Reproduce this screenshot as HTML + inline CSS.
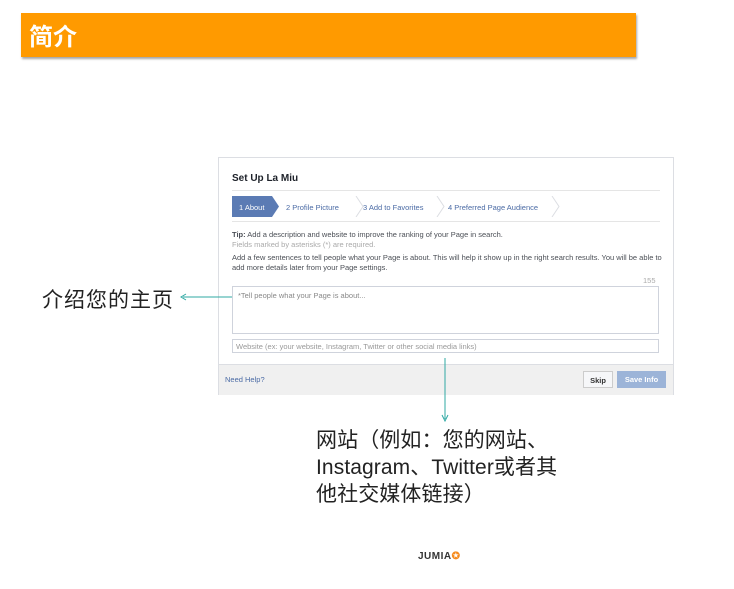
<!DOCTYPE html>
<html><head><meta charset="utf-8"><style>
body{margin:0;width:734px;height:589px;background:#fff;position:relative;font-family:"Liberation Sans",Arial,sans-serif;overflow:hidden}
.a{position:absolute}
.bar{left:21px;top:13px;width:615px;height:44px;background:#ff9a00;box-shadow:1px 2px 2px rgba(0,0,0,.35)}
.bar span{position:absolute;left:8px;top:4px;color:#fff;font:bold 24px "Noto Sans CJK SC",sans-serif}
.card{left:218px;top:157px;width:454px;height:236px;border:1px solid #dcdee3;background:#fff;font-size:7.5px;color:#4b4f56}
.zh{font-family:"Liberation Sans","Noto Sans CJK SC",sans-serif;color:#222}
</style></head><body>
<div class="a bar"><span>简介</span></div>
<div class="a card">
  <div class="a" style="left:13px;top:15px;font-size:10px;font-weight:bold;color:#1d2129">Set Up La Miu</div>
  <div class="a" style="left:13px;top:32px;width:428px;border-top:1px solid #e5e5e5"></div>
  <svg class="a" style="left:13px;top:38px" width="330" height="21">
    <path d="M0 0H40L47 10.5L40 21H0Z" fill="#5b7bb4"/>
    <path d="M124 0L131 10.5L124 21M205 0L212 10.5L205 21M320 0L327 10.5L320 21" fill="none" stroke="#dcdee3"/>
    <text x="7" y="14" fill="#fff" font-size="7.5" font-family="Liberation Sans">1 About</text>
    <text x="54" y="14" fill="#4b6ba5" font-size="7.5" font-family="Liberation Sans">2 Profile Picture</text>
    <text x="131" y="14" fill="#4b6ba5" font-size="7.5" font-family="Liberation Sans">3 Add to Favorites</text>
    <text x="216" y="14" fill="#4b6ba5" font-size="7.5" font-family="Liberation Sans">4 Preferred Page Audience</text>
  </svg>
  <div class="a" style="left:13px;top:63px;width:428px;border-top:1px solid #e5e5e5"></div>
  <div class="a" style="left:13px;top:72px"><b>Tip:</b> Add a description and website to improve the ranking of your Page in search.</div>
  <div class="a" style="left:13px;top:82px;color:#aaa">Fields marked by asterisks (*) are required.</div>
  <div class="a" style="left:13px;top:95px;width:430px;line-height:10px">Add a few sentences to tell people what your Page is about. This will help it show up in the right search results. You will be able to add more details later from your Page settings.</div>
  <div class="a" style="left:424px;top:118px;color:#aaa">155</div>
  <div class="a" style="left:13px;top:128px;width:427px;height:48px;border:1px solid #cfd3dc;color:#888;padding:4px 5px;box-sizing:border-box">*Tell people what your Page is about...</div>
  <div class="a" style="left:13px;top:181px;width:427px;height:14px;border:1px solid #cfd3dc;color:#999;padding:2px 3px;box-sizing:border-box">Website (ex: your website, Instagram, Twitter or other social media links)</div>
  <div class="a" style="left:0;top:206px;width:454px;height:30px;background:#f0f0f0;border-top:1px solid #dcdee3"></div>
  <div class="a" style="left:6px;top:217px;color:#4b6ba5">Need Help?</div>
  <div class="a" style="left:364px;top:213px;width:30px;height:17px;border:1px solid #ccc;background:#f6f7f9;font-weight:bold;color:#333;text-align:center;line-height:17px;box-sizing:border-box">Skip</div>
  <div class="a" style="left:398px;top:213px;width:49px;height:17px;background:#9cb4d8;font-weight:bold;color:#fff;text-align:center;line-height:17px">Save Info</div>
</div>
<div class="a zh" style="left:42px;top:284px;font-size:21px;letter-spacing:1px">介绍您的主页</div>
<svg class="a" style="left:0;top:0" width="734" height="589">
  <path d="M183 297H232" stroke="#2fa9a3" stroke-width="1"/>
  <path d="M186 294L181 297L186 300" fill="none" stroke="#2fa9a3"/>
  <path d="M445 358V419" stroke="#2fa9a3"/>
  <path d="M442 415L445 421L448 415" fill="none" stroke="#2fa9a3"/>
</svg>
<div class="a zh" style="left:316px;top:427px;font-size:21px;line-height:27px;width:300px;letter-spacing:0.1px">网站（例如：您的网站、<br>Instagram、Twitter或者其<br>他社交媒体链接）</div>
<div class="a" style="left:418px;top:551px;font-size:10px;font-weight:bold;color:#333;letter-spacing:0.5px">JUMIA<span style="color:#f68b1e">✪</span></div>
</body></html>
